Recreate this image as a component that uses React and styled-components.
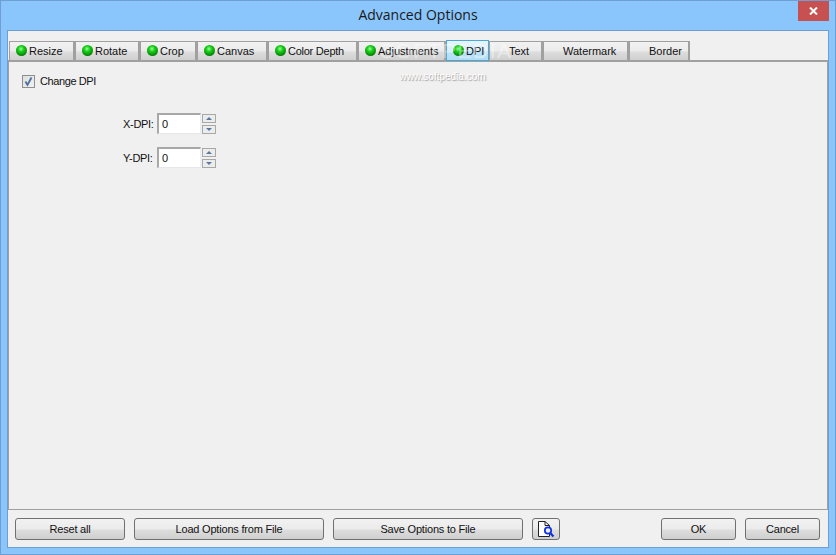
import React from 'react';
import styled, { createGlobalStyle } from 'styled-components';

const GlobalStyle = createGlobalStyle`
	html, body {
		margin: 0;
		padding: 0;
		background: #8ac5fb;
	}
	* {
		box-sizing: border-box;
	}
`;

const Window = styled.div`
	width: 836px;
	height: 555px;
	display: flex;
	flex-direction: column;
	padding: 0 6px 6px 6px;
	background: #8ac5fb;
	border: 1px solid #6f9fd2;
	font-family: 'Liberation Sans', Arial, sans-serif;
	font-size: 11px;
	color: #111;
	overflow: hidden;
`;

const TitleBar = styled.div`
	height: 29px;
	flex: none;
	display: grid;
	grid-template-columns: 1fr auto 1fr;
`;

const Title = styled.div`
	grid-column: 2;
	font-family: 'Open Sans', sans-serif;
	font-size: 14px;
	line-height: 29px;
	margin-top: -1px;
	color: #1a1a1a;
`;

const CloseButton = styled.div`
	grid-column: 3;
	justify-self: end;
	width: 31px;
	height: 20px;
	background: #c75050;
	display: flex;
	align-items: center;
	justify-content: center;
`;

const Client = styled.div`
	flex: 1;
	display: flex;
	flex-direction: column;
	background: #f0f0f0;
	position: relative;
	min-height: 0;
	border: 1px solid #6f9fd2;
`;

const TabStrip = styled.div`
	display: flex;
	align-items: flex-end;
	flex: none;
	height: 19px;
	margin-top: 10px;
	padding-left: 1px;
`;

const Tab = styled.div`
	width: ${(p) => p.$width}px;
	height: ${(p) => (p.$active ? 21 : 19)}px;
	flex: none;
	display: flex;
	align-items: center;
	padding: 0 0 ${(p) => (p.$active ? 0 : 1)}px 6px;
	gap: 2px;
	letter-spacing: ${(p) => p.$spacing || 0}px;
	border: ${(p) => (p.$active ? '1px solid #4aa8d8' : '1px solid #a0a0a0')};
	border-bottom: ${(p) => (p.$active ? '1px solid #4aa8d8' : 'none')};
	border-right-width: ${(p) => (p.$active ? '1px' : '2px')};
	margin-bottom: ${(p) => (p.$active ? '-1px' : '0')};
	position: relative;
	z-index: ${(p) => (p.$active ? 1 : 0)};
	background: ${(p) =>
		p.$active
			? 'linear-gradient(#e6f4fc 0%, #d8eefa 50%, #bce3f7 55%, #b0def6 100%)'
			: 'linear-gradient(#f2f2f2 0%, #ebebeb 50%, #dddddd 55%, #d0d0d0 100%)'};
`;

const StatusDot = styled.span`
	width: 11px;
	height: 11px;
	flex: none;
	border-radius: 50%;
	background: ${(p) =>
		p.$on
			? 'radial-gradient(circle at 45% 35%, #9dfc9d 0%, #18d018 30%, #089008 65%, #044a04 100%)'
			: 'transparent'};
`;

const TabLabel = styled.span`
	white-space: nowrap;
	line-height: 18px;
`;

const Panel = styled.div`
	flex: 1;
	min-height: 0;
	border: 1px solid #a0a0a0;
	border-top-width: 2px;
	padding: 13px 0 0 13px;
`;

const CheckRow = styled.label`
	display: flex;
	align-items: flex-start;
	gap: 5px;
	height: 13px;
`;

const CheckText = styled.span`
	line-height: 12px;
	letter-spacing: -0.4px;
`;

const CheckBox = styled.span`
	width: 13px;
	height: 13px;
	border: 1px solid #8e8f8f;
	background: linear-gradient(135deg, #dedede, #f2f2f2);
	display: flex;
	align-items: center;
	justify-content: center;
`;

const DpiFields = styled.div`
	display: flex;
	flex-direction: column;
	gap: 13px;
	margin: 25px 0 0 101px;
`;

const DpiRow = styled.div`
	display: flex;
	align-items: center;
	height: 21px;
`;

const DpiLabel = styled.span`
	width: 34px;
	letter-spacing: -0.3px;
`;

const DpiInput = styled.div`
	width: 44px;
	height: 21px;
	background: #fff;
	border-style: solid;
	border-width: 2px 1px 1px 2px;
	border-color: #a8a8a8 #eceef2 #e4e6ea #a8a8a8;
	padding-left: 3px;
	line-height: 18px;
`;

const Spinner = styled.div`
	display: flex;
	flex-direction: column;
	align-self: flex-start;
	gap: 2px;
	padding-top: 1px;
	margin-left: 1px;
`;

const SpinButton = styled.div`
	width: 14px;
	height: 9px;
	border: 1px solid #a8a8a8;
	background: #ececec;
	display: flex;
	align-items: center;
	justify-content: center;
`;

const SpinArrow = styled.span`
	width: 0;
	height: 0;
	border-left: 3px solid transparent;
	border-right: 3px solid transparent;
	${(p) => (p.$down ? 'border-top: 3px solid #5878a0;' : 'border-bottom: 3px solid #5878a0;')}
`;

const Footer = styled.div`
	flex: none;
	height: 37px;
	display: flex;
	align-items: flex-start;
	padding: 8px 7px 0 7px;
`;

const Button = styled.div`
	width: ${(p) => p.$width}px;
	height: 22px;
	margin-left: ${(p) => p.$gap || 0}px;
	flex: none;
	display: flex;
	align-items: center;
	justify-content: center;
	letter-spacing: -0.2px;
	border: 1px solid #707070;
	border-radius: 3px;
	background: linear-gradient(#f2f2f2 0%, #ebebeb 50%, #dddddd 55%, #cfcfcf 100%);
`;

const Watermark = styled.div`
	position: absolute;
	left: 372px;
	top: 10px;
	width: 125px;
	color: #fff;
	pointer-events: none;
	text-align: center;
	z-index: 2;
`;

const WatermarkBig = styled.div`
	font-size: 21px;
	letter-spacing: 1.5px;
	line-height: 20px;
	opacity: 0.4;
`;

const WatermarkUrl = styled.div`
	font-size: 10px;
	line-height: 12px;
	margin-top: 10px;
	text-shadow: 1px 1px 1px rgba(120, 120, 120, 0.7);
`;

const tabs = [
	{ label: 'Resize', width: 66, on: true },
	{ label: 'Rotate', width: 65, on: true },
	{ label: 'Crop', width: 57, on: true },
	{ label: 'Canvas', width: 71, on: true },
	{ label: 'Color Depth', width: 90, on: true, spacing: -0.25 },
	{ label: 'Adjustments', width: 88, on: true },
	{ label: 'DPI', width: 43, on: true, active: true },
	{ label: 'Text', width: 54 },
	{ label: 'Watermark', width: 86 },
	{ label: 'Border', width: 61 },
];

function CloseIcon() {
	return (
		<svg width="9" height="8" viewBox="0 0 9 8">
			<path d="M1 0.5 L8 7.5 M8 0.5 L1 7.5" stroke="#fff" strokeWidth="2" />
		</svg>
	);
}

function CheckIcon() {
	return (
		<svg width="11" height="11" viewBox="0 0 11 11">
			<path d="M2.5 5.5 L4.5 9 L8.5 1.5" fill="none" stroke="#4a6f9e" strokeWidth="1.8" />
		</svg>
	);
}

function PreviewIcon() {
	return (
		<svg width="18" height="18" viewBox="0 0 18 18">
			<path d="M1.5 1.5 H8 L12.5 5.5 V16.5 H1.5 Z" fill="#fff" stroke="#222" />
			<path d="M8 1.5 V5.5 H12.5" fill="none" stroke="#222" />
			<circle cx="11" cy="10.5" r="3.2" fill="#e8f0ff" stroke="#1030e0" strokeWidth="1.7" />
			<path d="M13.2 13 L16.5 16.5" stroke="#1030e0" strokeWidth="2.2" />
		</svg>
	);
}

function DpiField({ label }) {
	return (
		<DpiRow>
			<DpiLabel>{label}</DpiLabel>
			<DpiInput>0</DpiInput>
			<Spinner>
				<SpinButton>
					<SpinArrow />
				</SpinButton>
				<SpinButton>
					<SpinArrow $down />
				</SpinButton>
			</Spinner>
		</DpiRow>
	);
}

function App() {
	return (
		<>
			<GlobalStyle />
			<Window>
				<TitleBar>
					<Title>Advanced Options</Title>
					<CloseButton>
						<CloseIcon />
					</CloseButton>
				</TitleBar>
				<Client>
					<TabStrip>
						{tabs.map((t) => (
							<Tab key={t.label} $width={t.width} $active={t.active} $spacing={t.spacing}>
								<StatusDot $on={t.on} />
								<TabLabel>{t.label}</TabLabel>
							</Tab>
						))}
					</TabStrip>
					<Panel>
						<CheckRow>
							<CheckBox>
								<CheckIcon />
							</CheckBox>
							<CheckText>Change DPI</CheckText>
						</CheckRow>
						<DpiFields>
							<DpiField label="X-DPI:" />
							<DpiField label="Y-DPI:" />
						</DpiFields>
					</Panel>
					<Footer>
						<Button $width={110}>Reset all</Button>
						<Button $width={190} $gap={9}>Load Options from File</Button>
						<Button $width={190} $gap={9}>Save Options to File</Button>
						<Button $width={28} $gap={9}>
							<PreviewIcon />
						</Button>
						<Button $width={75} $gap={101}>OK</Button>
						<Button $width={75} $gap={9}>Cancel</Button>
					</Footer>
					<Watermark>
						<WatermarkBig>SOFTPEDIA</WatermarkBig>
						<WatermarkUrl>www.softpedia.com</WatermarkUrl>
					</Watermark>
				</Client>
			</Window>
		</>
	);
}

export default App;
